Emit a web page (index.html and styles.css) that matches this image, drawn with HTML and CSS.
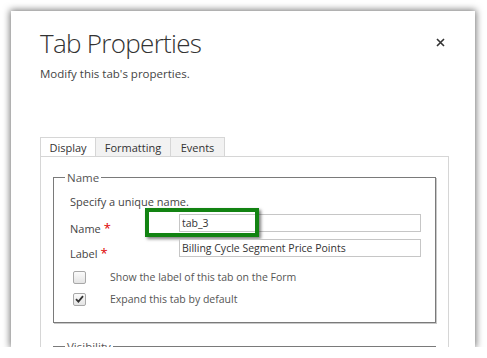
FILE: index.html
```html
<!DOCTYPE html>
<html lang="en">
<head>
    <meta charset="UTF-8">
    <title>Tab Properties</title>
    <link rel="stylesheet" href="styles.css">
</head>
<body>

<div class="dialog">
    <div class="dialog-header">
        <h1 class="dialog-title">Tab Properties</h1>
        <span class="close-button">
            <svg width="9" height="9" viewBox="0 0 9 9"><path d="M1 1 L8 8 M8 1 L1 8" stroke="#333" stroke-width="1.6"/></svg>
        </span>
    </div>
    <p class="dialog-subtitle">Modify this tab's properties.</p>

    <div class="tabs">
        <span class="tab tab-display active">Display</span>
        <span class="tab tab-formatting">Formatting</span>
        <span class="tab tab-events">Events</span>
    </div>

    <div class="tab-panel">
        <fieldset class="group">
            <legend>Name</legend>
            <p class="hint">Specify a unique name.</p>

            <div class="field-row">
                <label class="field-label">Name <span class="required">*</span></label>
                <input class="text-input" type="text" value="tab_3">
                <div class="highlight"></div>
            </div>
            <div class="field-row">
                <label class="field-label">Label <span class="required">*</span></label>
                <input class="text-input" type="text" value="Billing Cycle Segment Price Points">
            </div>

            <div class="checks">
                <div class="check-row">
                    <span class="checkbox"></span>
                    <span class="check-label">Show the label of this tab on the Form</span>
                </div>
                <div class="check-row">
                    <span class="checkbox checked">
                        <svg width="9" height="8" viewBox="0 0 9 8"><path d="M1 4.2 L3.4 6.6 L8 1.2" fill="none" stroke="#333" stroke-width="1.8"/></svg>
                    </span>
                    <span class="check-label">Expand this tab by default</span>
                </div>
            </div>
        </fieldset>

        <fieldset class="group">
            <legend>Visibility</legend>
        </fieldset>
    </div>
</div>

</body>
</html>
```

FILE: styles.css
```css
:root {
    --text-color: #444;
    --title-color: #333;
    --tab-border: #d6d6d6;
    --input-border: #c6c6c6;
    --group-border: #7a7a7a;
    --highlight: #128312;
}

body {
    margin: 0;
    padding: 11px 12px 0 11px;
    background: #fff;
    font-family: "Open Sans", "Noto Sans", sans-serif;
    color: var(--text-color);
}

.dialog {
    height: 336px;
    padding: 0 26px 0 29px;
    background: #fff;
    box-shadow: 0 0 7px 1px rgba(0, 0, 0, 0.55);
    overflow: hidden;
    box-sizing: border-box;
}

.dialog-header {
    display: flex;
    justify-content: space-between;
    align-items: flex-start;
    padding-top: 17px;
}

.dialog-title {
    margin: 0;
    font-size: 26px;
    font-weight: 300;
    letter-spacing: -0.7px;
    line-height: 30px;
    color: var(--title-color);
}

.close-button {
    display: flex;
    margin: 10px 4px 0 0;
}

.dialog-subtitle {
    margin: 8px 0 0;
    font-size: 11.5px;
    line-height: 16px;
}

.tabs {
    display: flex;
    margin-top: 55px;
}

.tab {
    height: 19px;
    line-height: 19px;
    font-size: 11px;
    text-align: center;
    box-sizing: border-box;
    background: #f2f2f2;
    border: 1px solid var(--tab-border);
    border-bottom: none;
    border-left: none;
    color: #333;
}

.tab-display {
    width: 56px;
    border-left: 1px solid var(--tab-border);
}

.tab-formatting {
    width: 75px;
}

.tab-events {
    width: 54px;
}

.tab.active {
    background: #fff;
}

.tab-panel {
    border: 1px solid var(--tab-border);
    padding: 13px 12px 0;
    height: 220px;
}

.group {
    margin: 0 0 16px;
    padding: 9px 0 12px 16px;
    border: 1px solid var(--group-border);
    box-shadow: 1px 1px 0 #c8c8c8;
}

.group legend {
    padding: 0 2px;
    margin-left: -5px;
    font-size: 11.5px;
    color: #555;
}

.hint {
    margin: 0 0 4px;
    font-size: 11px;
    line-height: 16px;
}

.field-row {
    position: relative;
    display: flex;
    align-items: center;
    height: 18px;
    margin-bottom: 7px;
}

.field-label {
    width: 109px;
    font-size: 11px;
    padding-top: 9px;
}

.required {
    color: #d00;
    font-size: 13px;
}

.text-input {
    width: 242px;
    height: 18px;
    box-sizing: border-box;
    border: 1px solid var(--input-border);
    padding: 0 2px;
    font-family: inherit;
    font-size: 10.5px;
    color: #333;
    outline: none;
}

.highlight {
    position: absolute;
    left: 75px;
    top: -6px;
    width: 114px;
    height: 29px;
    box-sizing: border-box;
    border: 4px solid var(--highlight);
    box-shadow: 2px 2px 3px rgba(0, 0, 0, 0.5);
}

.checks {
    padding-top: 2px;
}

.check-row {
    display: flex;
    align-items: center;
    height: 22px;
}

.checkbox {
    display: flex;
    align-items: center;
    justify-content: center;
    width: 11px;
    height: 11px;
    margin: 0 24px 0 3px;
    border: 1px solid #a8a8a8;
    border-radius: 2px;
    background: linear-gradient(#fbfbfb, #e4e4e4);
}

.check-label {
    font-size: 10.5px;
    color: #555;
}
```
